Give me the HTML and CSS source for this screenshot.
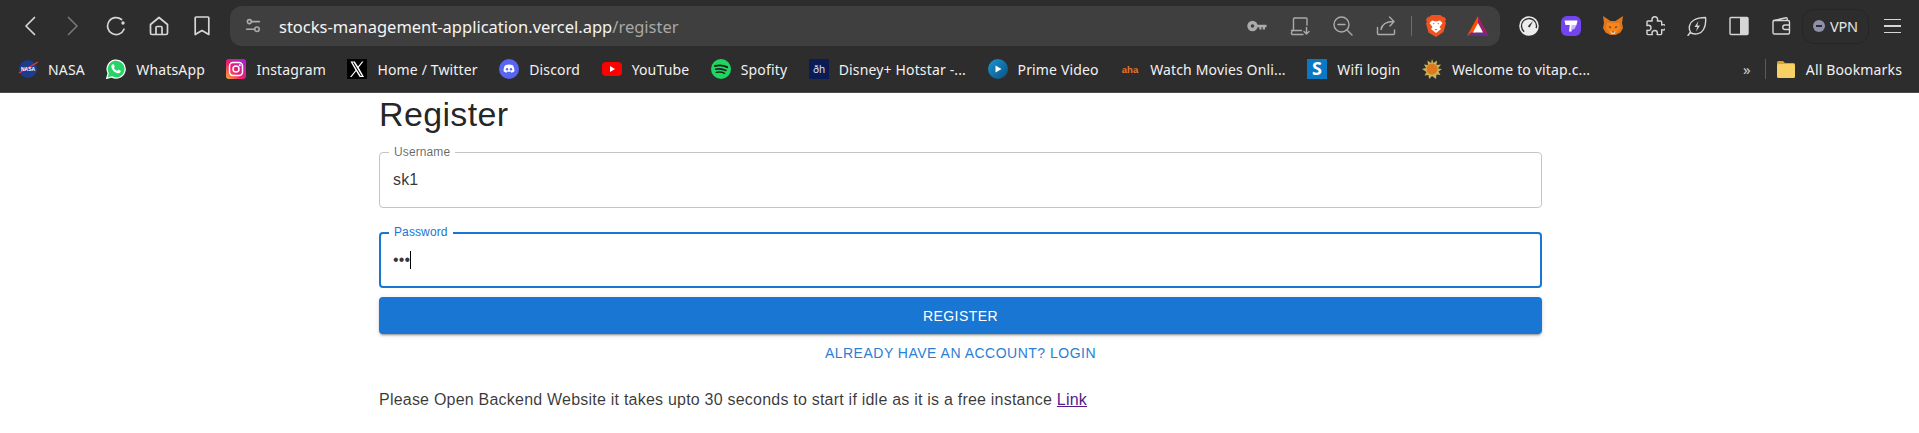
FILE: index.html
```html
<!DOCTYPE html>
<html lang="en">
<head>
  <meta charset="UTF-8" />
  <meta name="viewport" content="width=device-width, initial-scale=1.0"/>
  <title>Register</title>
  <link rel="stylesheet" href="styles.css">
</head>
<body>

  <header class="browser">
    <div class="toolbar">
      <div class="nav">
        <span class="slot"><svg class="ico" viewBox="0 0 20 20"><path d="M14.500 1.500 6 10l8.500 8.500"/></svg></span>
        <span class="slot dim"><svg class="ico" viewBox="0 0 20 20"><path d="M5.500 1.500 14 10l-8.500 8.500"/></svg></span>
        <span class="slot"><svg class="ico" viewBox="0 0 20 20"><path d="M15.500 3.500A8.500 8.500 0 1 0 18 13.200"/><circle class="solid" cx="17" cy="7" r="1.700"/></svg></span>
        <span class="slot"><svg class="ico" viewBox="0 0 20 20"><path d="M10 1.500 1.500 8.500V17a1.500 1.500 0 0 0 1.500 1.500h14a1.500 1.500 0 0 0 1.500-1.500V8.500ZM7 18.500V11.500a1 1 0 0 1 1-1h4a1 1 0 0 1 1 1v7"/></svg></span>
        <span class="slot"><svg class="ico" viewBox="0 0 20 20"><path d="M4 1h12a.8.8 0 0 1 .8.8V18.500L10 14.500 3.200 18.500V1.800A.8.8 0 0 1 4 1Z"/></svg></span>
      </div>

      <div class="omnibox">
        <svg class="ico tune" viewBox="0 0 20 20"><circle cx="5.500" cy="4.500" r="2.500"/><path d="M8 4.500h10M2 14h10"/><circle cx="15" cy="14" r="2.800"/></svg>
        <span class="url">stocks-management-application.vercel.app<span class="url-path">/register</span></span>
        <span class="omni-tools">
          <span class="slot grey"><svg class="ico" viewBox="0 0 20 20"><circle cx="5.500" cy="10" r="3.500" stroke-width="3.400"/><path d="M9 8.800h10.500v2.400H18v2.300h-2.200v-2.300h-1.300v2.300h-2.200v-2.300H9Z" class="solid"/></svg></span>
          <span class="slot grey"><svg class="ico thin" viewBox="0 0 20 20"><path d="M17 9V3a1 1 0 0 0-1-1H4.500a1 1 0 0 0-1 1V13M3.500 13 1.500 16.500V17.500a1 1 0 0 0 1 1H13M1.500 14.500h10M16.500 11.500v6.500M14 15.500l2.500 2.500 2.500-2.500"/></svg></span>
          <span class="slot grey"><svg class="ico thin" viewBox="0 0 20 20"><circle cx="8.500" cy="8.500" r="7.500"/><path d="M5 8.500h7M14 14l5 5"/></svg></span>
          <span class="slot grey"><svg class="ico thin" viewBox="0 0 20 20"><path d="M1.500 11.500v6a1 1 0 0 0 1 1h15a1 1 0 0 0 1-1V14M5 13.500C6 8.500 10 5.500 17.500 5.500M13.500 1l4.500 4.500L14 10"/></svg></span>
          <span class="omni-sep"></span>
          <span class="slot brand"><svg class="logo tall" viewBox="0 0 20 22"><path fill="#f1531f" d="M5.500 0h9L16 1.500l2 .5 2 2-.8 2.500.8 1.500-2.500 9L10 22l-7.500-4.500L0 8.500l.8-1.500L0 4.500 2 2l2-.5Z"/><path fill="#fff" d="M6 5.500 10 6.500 14 5.500 16.500 8 13.500 12 15 14 10 18 5 14 6.500 12 3.500 8Z"/><path fill="#f1531f" d="M8 9.500 6.500 8.500 8.500 8ZM12 9.500l1.500-1-2-.5ZM8.500 14h3L10 15.500Z"/></svg></span>
          <span class="slot brand"><svg class="logo wide" viewBox="0 0 22 20"><path fill="#ff5000" d="M11 0 0 20h6L11 11Z"/><path fill="#9e1f63" d="M11 0 22 20h-6L11 11Z"/><path fill="#662d91" d="M0 20h22l-4-3.500H4Z"/><path fill="#fff" d="M11 7 16 16.500H6Z"/></svg></span>
        </span>
      </div>

      <div class="extensions">
        <span class="slot wide-slot"><svg class="logo wide" viewBox="0 0 20 20"><circle cx="10" cy="10" r="9.800" fill="#ececec"/><circle cx="10" cy="10" r="7.500" fill="none" stroke="#2d2d2d" stroke-width="1.300" stroke-dasharray="32 15" transform="rotate(130 10 10)"/><path d="M8.800 10.200 14 5l-3.400 6.500Z" fill="#2d2d2d"/></svg></span>
        <span class="slot wide-slot"><svg class="logo" viewBox="0 0 20 20"><rect width="20" height="20" rx="6" fill="#7344f0"/><path fill="#fff" d="M3.500 4.500h13l-1 4.500H11.500l-1 6.500H8l.8-6.500H4.500Z"/><path fill="#c9b8fa" d="M10.500 9h5l-2 4-3.500 1Z"/></svg></span>
        <span class="slot wide-slot"><svg class="logo" viewBox="0 0 20 20"><path fill="#e2761b" d="M0 0 7.500 5h5L20 0l-1 7 1 5-2.500 4.500-5 2.500h-5l-5-2.500L0 12l1-5Z"/><path fill="#f6851b" d="M4 7h12l1 5-4 5H7l-4-5Z"/><path fill="#763d16" d="m5.500 10 3 1-1.500 1.500ZM14.500 10l-3 1 1.500 1.500Z"/><path fill="#e4d5c5" d="M7.500 15.500h5L11.500 18h-3Z"/><path fill="#2b2b2b" d="M8.800 15.500h2.400L10 17Z"/></svg></span>
        <span class="slot wide-slot"><svg class="ico thin" viewBox="0 0 20 20"><path d="M7 3.500a2.800 2.800 0 0 1 5.600 0c0 .5-.2 1-.2 1.500h3.300a1 1 0 0 1 1 1v3c.6-.2 1-.4 1.400-.4a2.700 2.700 0 0 1 0 5.400c-.4 0-.9-.2-1.400-.4v4a1 1 0 0 1-1 1h-3.600c.2-.5.3-1 .3-1.400a2.700 2.700 0 0 0-5.400 0c0 .4.100.9.300 1.400H3a1 1 0 0 1-1-1v-3.500c.5.200 1 .4 1.400.4a2.600 2.600 0 0 0 0-5.200c-.4 0-.9.200-1.400.4V6a1 1 0 0 1 1-1h4.200C7.100 4.500 7 4 7 3.500Z"/></svg></span>
        <span class="slot wide-slot"><svg class="ico thin" viewBox="0 0 20 20"><path d="M1 19.500 3.500 16C1 12 2.500 6.500 7 4c3.500-2 7.500-2.500 11.500-2.500.5 4 0 8.500-2 12-2.500 4.500-8 5.500-12.500 3.500"/><path class="solid" d="M11.500 5 7.500 11h2.700l-1.200 4.500L13 9.500h-2.700Z"/></svg></span>
        <span class="slot wide-slot"><svg class="ico thin" viewBox="0 0 20 20"><rect x="1" y="1.500" width="18" height="17" rx="1"/><rect class="solid" x="11" y="1.500" width="8" height="17"/></svg></span>
        <span class="slot wide-slot"><svg class="ico thin" viewBox="0 0 20 20"><path d="M2.500 4.500 15 1.800a1 1 0 0 1 1.200 1V4.500M2 5.500A1.500 1.500 0 0 1 3.500 4.500H17a1.500 1.500 0 0 1 1.500 1.500V16.500a1.500 1.500 0 0 1-1.500 1.500H3.500A1.500 1.500 0 0 1 2 16.500ZM18.500 9H14a2.200 2.200 0 0 0 0 4.500h4.500"/></svg></span>
      </div>

      <div class="vpn"><span class="vpn-dot"></span>VPN</div>
      <span class="menu"><span></span><span></span><span></span></span>
    </div>

    <nav class="bookmarks">
      <a class="mark"><svg class="mark-icon" viewBox="0 0 20 20"><circle cx="10" cy="10" r="9" fill="#1d3c8f"/><path d="M1 14 20 3" stroke="#e03a3e" stroke-width="1.300"/><text x="10" y="12" class="tiny">NASA</text></svg>NASA</a>
      <a class="mark"><svg class="mark-icon" viewBox="0 0 20 20"><path fill="#25d366" stroke="#fff" stroke-width="1.300" d="M.8 19.300 2.200 14.300A9 9 0 1 1 5.700 17.900Z"/><path fill="#fff" d="M7 5.200c.5 0 .8 0 1 .6l.7 1.600c.1.300 0 .6-.2.800l-.6.800c.8 1.300 1.800 2.200 3.200 2.900l.8-.9c.2-.2.500-.3.800-.2l1.600.8c.4.200.5.500.4.900-.3 1.200-1.400 1.800-2.500 1.700-3.300-.4-6.200-3.100-6.800-6.300-.2-1.100.4-2.500 1.600-2.700Z"/></svg>WhatsApp</a>
      <a class="mark"><svg class="mark-icon" viewBox="0 0 20 20"><defs><linearGradient id="ig" x1="0" y1="1" x2="1" y2="0"><stop offset="0" stop-color="#fdb32a"/><stop offset=".4" stop-color="#f0206b"/><stop offset="1" stop-color="#a020e0"/></linearGradient></defs><rect width="20" height="20" rx="3" fill="url(#ig)"/><rect x="3.500" y="3.500" width="13" height="13" rx="3.500" fill="none" stroke="#fff" stroke-width="1.500"/><circle cx="10" cy="10" r="3" fill="none" stroke="#fff" stroke-width="1.500"/><circle cx="13.800" cy="6.200" r="1" fill="#fff"/></svg>Instagram</a>
      <a class="mark"><svg class="mark-icon" viewBox="0 0 20 20"><rect width="20" height="20" fill="#000"/><path fill="#fff" d="M3.500 2.500h4.300l3.200 5 4-5h1.500l-4.800 6 5.300 9.500h-4.300l-3.600-5.700-4.600 5.700H3l5.500-6.800Zm2 1 8.300 13.500h1.100L6.700 3.500Z"/></svg>Home / Twitter</a>
      <a class="mark"><svg class="mark-icon" viewBox="0 0 20 20"><circle cx="10" cy="10" r="10" fill="#5865f2"/><path fill="#fff" d="M6.200 6.200c2.400-1 5.200-1 7.600 0 1.200 1.800 1.700 3.700 1.600 6-1 .8-2 1.200-3 1.500l-.7-1.100c-1.100.3-2.300.3-3.400 0l-.7 1.100c-1-.3-2-.7-3-1.500-.1-2.300.4-4.200 1.600-6Z"/><circle cx="8" cy="10.200" r="1.200" fill="#5865f2"/><circle cx="12" cy="10.200" r="1.200" fill="#5865f2"/></svg>Discord</a>
      <a class="mark"><svg class="mark-icon" viewBox="0 0 20 20"><rect y="3" width="20" height="14" rx="4" fill="#f00"/><path fill="#fff" d="m8 7 5 3-5 3Z"/></svg>YouTube</a>
      <a class="mark"><svg class="mark-icon" viewBox="0 0 20 20"><circle cx="10" cy="10" r="10" fill="#1ed760"/><path fill="none" stroke="#1f1f1f" stroke-linecap="round" stroke-width="1.900" d="M4 7c4-1 8.500-.8 12.200 1.200"/><path fill="none" stroke="#1f1f1f" stroke-linecap="round" stroke-width="1.600" d="M4.700 10.300c3.500-.8 7-.5 10.300 1.200"/><path fill="none" stroke="#1f1f1f" stroke-linecap="round" stroke-width="1.300" d="M5.200 13.300c3-.6 5.800-.3 8.500 1"/></svg>Spofity</a>
      <a class="mark"><svg class="mark-icon" viewBox="0 0 20 20"><rect width="20" height="20" fill="#0c1a55"/><text x="10" y="14" class="hotstar">ðh</text></svg>Disney+ Hotstar -...</a>
      <a class="mark"><svg class="mark-icon" viewBox="0 0 20 20"><defs><linearGradient id="pv" x1="0" y1="0" x2="1" y2="1"><stop offset="0" stop-color="#1a98d5"/><stop offset="1" stop-color="#0b4f7e"/></linearGradient></defs><circle cx="10" cy="10" r="10" fill="url(#pv)"/><path fill="#fff" d="m7.500 6.500 6 3.500-6 3.500Z"/></svg>Prime Video</a>
      <a class="mark"><svg class="mark-icon" viewBox="0 0 20 20"><text x="10" y="14" class="aha">aha</text></svg>Watch Movies Onli...</a>
      <a class="mark"><svg class="mark-icon" viewBox="0 0 20 20"><rect width="20" height="20" fill="#0a78c2"/><text x="10" y="16" class="sophos">S</text></svg>Wifi login</a>
      <a class="mark"><svg class="mark-icon" viewBox="0 0 20 20"><path fill="#c9b458" d="M10 0l1.500 4 3.500-2.500-.5 4.500 4.500-.5L16 9.500l4 .5-3.500 2.500 2 3.500-4-.5-.5 4.500-4-3-3 3-.5-4-4 .5 2-3.500L0 10l4-1L2 5.500l4 .5-.5-4.500L9 4Z"/><circle cx="10" cy="10" r="5.500" fill="#e0791d"/></svg>Welcome to vitap.c...</a>
      <span class="mark-more">»</span>
      <span class="mark-sep"></span>
      <a class="mark"><svg class="mark-icon" viewBox="0 0 20 20"><path fill="#d9a428" d="M1 3.500A1.500 1.500 0 0 1 2.500 2H7l2 2h8.500A1.500 1.500 0 0 1 19 5.500V8H1Z"/><rect x="1" y="5" width="18" height="14" rx="1.500" fill="#f7d163"/></svg>All Bookmarks</a>
    </nav>
  </header>

  <main class="page">
    <h1 class="title">Register</h1>

    <div class="field">
      <label class="field-label">Username</label>
      <input class="field-input" type="text" value="sk1" />
    </div>

    <div class="field field-focus">
      <label class="field-label">Password</label>
      <input class="field-input" type="password" value="abc" />
      <span class="caret"></span>
    </div>

    <button class="btn-main" type="button">Register</button>
    <button class="btn-text" type="button">Already have an account? Login</button>

    <p class="note">Please Open Backend Website it takes upto 30 seconds to start if idle as it is a free instance <a href="#" class="note-link">Link</a></p>
  </main>

</body>
</html>
```

FILE: styles.css
```css
* {
  box-sizing: border-box;
}
body {
  margin: 0;
  background: #fff;
  font-family: "Liberation Sans", Arial, sans-serif;
  overflow: hidden;
}

/* browser chrome */
.browser {
  background: #2d2d2d;
  border-bottom: 1px solid #4b4b4b;
  font-family: "Noto Sans", sans-serif;
  color: #f1f1f1;
}
.toolbar {
  display: flex;
  align-items: center;
  height: 46px;
  padding: 6px 0 0 8px;
}
.nav {
  display: flex;
  flex: 0 0 auto;
  margin-right: 7px;
}
.slot {
  display: flex;
  align-items: center;
  justify-content: center;
  width: 43px;
  height: 40px;
  color: #d6d6d6;
}
.dim {
  color: #767676;
}
.grey {
  color: #ababab;
}
.ico {
  width: 20px;
  height: 20px;
  fill: none;
  stroke: currentColor;
  stroke-width: 1.700;
  stroke-linejoin: round;
  stroke-linecap: round;
}
.ico.thin {
  stroke-width: 1.400;
}
.ico .solid {
  fill: currentColor;
  stroke: none;
}
.logo {
  width: 20px;
  height: 20px;
}
.logo.wide {
  width: 22px;
}
.logo.tall {
  height: 22px;
}
.omnibox {
  display: flex;
  align-items: center;
  width: 1270px;
  height: 40px;
  padding: 0 1px 0 15px;
  background: #3f3f3f;
  border-radius: 12px;
}
.tune {
  width: 16px;
  height: 16px;
  margin-right: 18px;
  color: #ababab;
  stroke-width: 2;
}
.url {
  flex: 1;
  font-size: 16.500px;
  color: #f4f4f4;
  white-space: nowrap;
}
.url-path {
  color: #a8a8a8;
}
.omni-tools {
  display: flex;
  align-items: center;
}
.omni-sep {
  width: 1px;
  height: 20px;
  margin: 0 3px 0 4px;
  background: #6c6c6c;
}
.brand {
  width: 42px;
}
.extensions {
  display: flex;
  margin-left: 8px;
}
.wide-slot {
  width: 42px;
}
.vpn {
  display: flex;
  align-items: center;
  gap: 5px;
  width: 67px;
  height: 35px;
  padding-left: 10px;
  border: 1px solid #262626;
  border-radius: 12px;
  font-size: 14.500px;
  letter-spacing: -0.2px;
  color: #e6e6e6;
}
.vpn-dot {
  position: relative;
  flex: 0 0 12px;
  height: 12px;
  border-radius: 50%;
  background: #8d90a8;
}
.vpn-dot::after {
  content: "";
  position: absolute;
  left: 3px;
  right: 3px;
  top: 5px;
  height: 2px;
  background: #2d2d2d;
}
.menu {
  display: flex;
  flex-direction: column;
  gap: 5px;
  width: 17px;
  margin-left: 15px;
}
.menu span {
  height: 1.500px;
  background: #d6d6d6;
}

/* bookmarks row */
.bookmarks {
  display: flex;
  align-items: center;
  height: 46px;
  padding-left: 18px;
  font-size: 14px;
  letter-spacing: 0.15px;
}
.mark {
  display: flex;
  align-items: center;
  gap: 10px;
  margin-right: 21.500px;
  white-space: nowrap;
}
.mark-icon {
  flex: 0 0 20px;
  width: 20px;
  height: 20px;
}
.mark-more {
  margin-left: auto;
  font-size: 15px;
  color: #d0d0d0;
}
.mark-sep {
  width: 1px;
  height: 20px;
  margin: 0 10px 0 14px;
  background: #5a5a5a;
}
.bookmarks .mark:last-child {
  margin-right: 17px;
}
.tiny {
  font: 700 5px "Liberation Sans", sans-serif;
  letter-spacing: 0;
  fill: #fff;
  text-anchor: middle;
}
.hotstar {
  font: 10px "Noto Sans", sans-serif;
  letter-spacing: 0;
  fill: #d8e0f5;
  text-anchor: middle;
}
.aha {
  font: 700 9.500px "Liberation Sans", sans-serif;
  letter-spacing: 0;
  fill: #e8762c;
  text-anchor: middle;
}
.sophos {
  font: 700 18px "Noto Sans", sans-serif;
  letter-spacing: 0;
  fill: #fff;
  text-anchor: middle;
}

/* page */
.page {
  display: flex;
  flex-direction: column;
  align-items: stretch;
  width: 1163px;
  margin-left: 379px;
}
.title {
  margin: 0 0 16px;
  height: 43px;
  font-size: 34px;
  font-weight: 400;
  line-height: 42px;
  letter-spacing: 0.35px;
  color: rgba(0, 0, 0, 0.87);
}
.field {
  position: relative;
  height: 56px;
  margin-bottom: 24px;
  border: 1px solid #c4c4c4;
  border-radius: 4px;
}
.field-label {
  position: absolute;
  left: 9px;
  top: -9px;
  padding: 0 5px;
  background: #fff;
  font-size: 12px;
  line-height: 16px;
  letter-spacing: 0.11px;
  color: rgba(0, 0, 0, 0.6);
}
.field-input {
  display: block;
  width: 100%;
  height: 100%;
  padding: 0 13px;
  border: 0;
  outline: 0;
  background: transparent;
  font-family: "Liberation Sans", Arial, sans-serif;
  font-size: 16px;
  letter-spacing: 0.15px;
  color: rgba(0, 0, 0, 0.8);
}
.field-focus {
  margin-bottom: 9px;
  border: 2px solid #1976d2;
}
.field-focus .field-label {
  left: 8px;
  top: -10px;
  color: #1976d2;
}
.field-focus .field-input {
  padding: 0 12px;
}
.caret {
  position: absolute;
  left: 29px;
  top: 17px;
  width: 1px;
  height: 18px;
  background: #000;
}
.btn-main {
  height: 37px;
  border: 0;
  border-radius: 4px;
  background: #1976d2;
  box-shadow: 0 3px 1px -2px rgba(0, 0, 0, 0.2), 0 2px 2px 0 rgba(0, 0, 0, 0.14), 0 1px 5px 0 rgba(0, 0, 0, 0.12);
  font-family: "Liberation Sans", Arial, sans-serif;
  font-size: 14px;
  letter-spacing: 0.45px;
  text-transform: uppercase;
  color: #fff;
}
.btn-text {
  height: 37px;
  border: 0;
  background: transparent;
  font-family: "Liberation Sans", Arial, sans-serif;
  font-size: 14px;
  letter-spacing: 0.5px;
  text-transform: uppercase;
  color: #2a80d6;
}
.note {
  margin: 17px 0 0;
  font-size: 16px;
  line-height: 24px;
  letter-spacing: 0.22px;
  color: rgba(0, 0, 0, 0.78);
}
.note-link {
  color: #551a8b;
}
```
